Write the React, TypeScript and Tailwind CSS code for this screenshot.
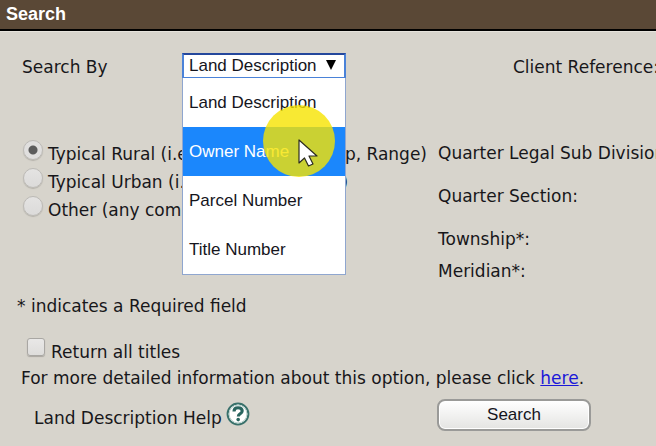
import { useState } from 'react';

const SEARCH_TYPES = ['Land Description', 'Owner Name', 'Parcel Number', 'Title Number'];

const FORMATS = [
  { id: 'rural', label: 'Typical Rural (i.e., Section, Township, Range)' },
  { id: 'urban', label: 'Typical Urban (i.e., Lot, Block, Plan)' },
  { id: 'other', label: 'Other (any combination)' },
];

function Pointer() {
  return (
    <div className="pointer-events-none absolute left-[81px] top-[52px] z-20 size-[72px] rounded-full bg-[#f6e400]/80">
      <svg viewBox="0 0 20 28" className="absolute left-[35px] top-[34px] h-7 w-5">
        <path
          d="M1 1v23l5.5-5 4 8 4.5-2-4-8H19z"
          fill="#fff"
          stroke="#2b2b20"
          strokeWidth="1.2"
          strokeLinejoin="round"
        />
      </svg>
    </div>
  );
}

function SearchBySelect() {
  const [value, setValue] = useState('Land Description');
  const [active, setActive] = useState('Owner Name');

  return (
    <div className="relative w-[164px] shrink-0 font-['Liberation_Sans',Arial,sans-serif] text-[17px]">
      <select
        id="search-by"
        value={value}
        onChange={(e) => setValue(e.target.value)}
        className="block h-[25px] w-full appearance-none border-2 border-b border-[#4a82d8] border-t-[#24479c] bg-white pl-[5px] leading-5 text-[#15151c] outline-none"
      >
        {SEARCH_TYPES.map((type) => (
          <option key={type}>{type}</option>
        ))}
      </select>
      <svg viewBox="0 0 10 10" className="pointer-events-none absolute right-[10px] top-[7px] size-[10px]">
        <path d="M0 0h10L5 10z" fill="#000" />
      </svg>

      <div className="absolute left-0 top-full z-10 w-full border border-t-0 border-[#8fa6cf] bg-white">
        {SEARCH_TYPES.map((type) => (
          <button
            key={type}
            type="button"
            onMouseEnter={() => setActive(type)}
            onClick={() => setValue(type)}
            className={`block h-[49px] w-full whitespace-nowrap pl-[6px] text-left ${
              type === active ? 'bg-[#1b87fc] text-white' : 'text-[#15151c]'
            }`}
          >
            {type}
          </button>
        ))}
      </div>
      <Pointer />
    </div>
  );
}

function HelpIcon() {
  return (
    <svg viewBox="0 0 24 24" className="size-6">
      <circle cx="12" cy="12" r="10.4" fill="#fff" stroke="#39716b" strokeWidth="2" />
      <circle cx="12" cy="12" r="8.9" fill="none" stroke="#b9d2cd" strokeWidth="1" />
      <path
        d="M8 9.4C8 6.8 9.6 5.7 12 5.7s4.2 1.2 4.2 3.3c0 2.7-3.9 2.9-3.9 5.4"
        fill="none"
        stroke="#2a655f"
        strokeWidth="3.1"
      />
      <circle cx="12.2" cy="17.6" r="1.8" fill="#2a655f" />
    </svg>
  );
}

export default function App() {
  const [format, setFormat] = useState('rural');
  const [allTitles, setAllTitles] = useState(false);

  return (
    <div className="min-h-screen overflow-hidden whitespace-nowrap bg-[#d7d4cc] font-['DejaVu_Sans',Verdana,sans-serif] text-[17px] leading-5 text-[#17171a]">
      <header className="border-b-2 border-black bg-[#5a4836] px-[6px] pb-[5px] pt-1">
        <h1 className="font-['Liberation_Sans',Arial,sans-serif] text-lg font-bold leading-5 text-white">
          Search
        </h1>
      </header>

      <form onSubmit={(e) => e.preventDefault()} className="border-t border-[#e6e3dc] pt-[21px]">
        <div className="flex items-end">
          <label htmlFor="search-by" className="w-[182px] shrink-0 pb-px pl-[22px]">
            Search By
          </label>
          <SearchBySelect />
          <span className="pb-px pl-[167px]">Client Reference:</span>
        </div>

        <div className="flex items-start pt-[62px]">
          <div className="flex w-[438px] shrink-0 flex-col gap-1 pl-[23px]">
            {FORMATS.map((f) => (
              <div key={f.id} className="flex h-6 items-end gap-[5px]">
                <input
                  id={f.id}
                  type="radio"
                  name="format"
                  checked={format === f.id}
                  onChange={() => setFormat(f.id)}
                  className="mb-1 size-5 shrink-0 appearance-none rounded-full border border-[#bcbab6] bg-linear-to-b from-[#e4e3e2] to-[#dcdbda] shadow-[0_1px_1px_#b5b2ab] checked:bg-[radial-gradient(circle,#5c5c5c_0_4px,#e0dfde_5px)]"
                />
                <label htmlFor={f.id}>{f.label}</label>
              </div>
            ))}
          </div>
          <div className="flex flex-col pt-[3px]">
            <span>Quarter Legal Sub Division:</span>
            <span className="pt-[23px]">Quarter Section:</span>
            <span className="pt-[23px]">Township*:</span>
            <span className="pt-3">Meridian*:</span>
          </div>
        </div>

        <p className="pl-[17px] pt-[15px]">* indicates a Required field</p>

        <div className="flex items-end gap-[6px] pl-[27px] pt-[22px]">
          <input
            id="all-titles"
            type="checkbox"
            checked={allTitles}
            onChange={(e) => setAllTitles(e.target.checked)}
            className="mb-[6px] size-[18px] appearance-none rounded-[3px] border border-[#a9a7a3] bg-linear-to-b from-[#e9e8e7] to-[#dedddb] shadow-[0_1px_1px_#aaa7a0] checked:bg-[#5c5c5c]"
          />
          <label htmlFor="all-titles">Return all titles</label>
        </div>

        <p className="pl-[21px] pt-[6px]">
          For more detailed information about this option, please click{' '}
          <a href="#titles" className="text-[#1b18d8] underline">
            here
          </a>
          .
        </p>

        <div className="flex items-start pt-[10px]">
          <div className="flex w-[437px] shrink-0 items-start gap-1 pl-[34px]">
            <span className="pt-[10px]">Land Description Help</span>
            <a href="#help" aria-label="Land Description Help" className="pt-1">
              <HelpIcon />
            </a>
          </div>
          <button
            type="submit"
            className="mt-px h-8 w-[154px] rounded-lg border-2 border-[#9a9a98] bg-linear-to-b from-white to-[#e4e4e2] font-['Liberation_Sans',Arial,sans-serif] text-[#15151c] shadow-[inset_0_0_0_1px_#fff]"
          >
            Search
          </button>
        </div>
      </form>
    </div>
  );
}
